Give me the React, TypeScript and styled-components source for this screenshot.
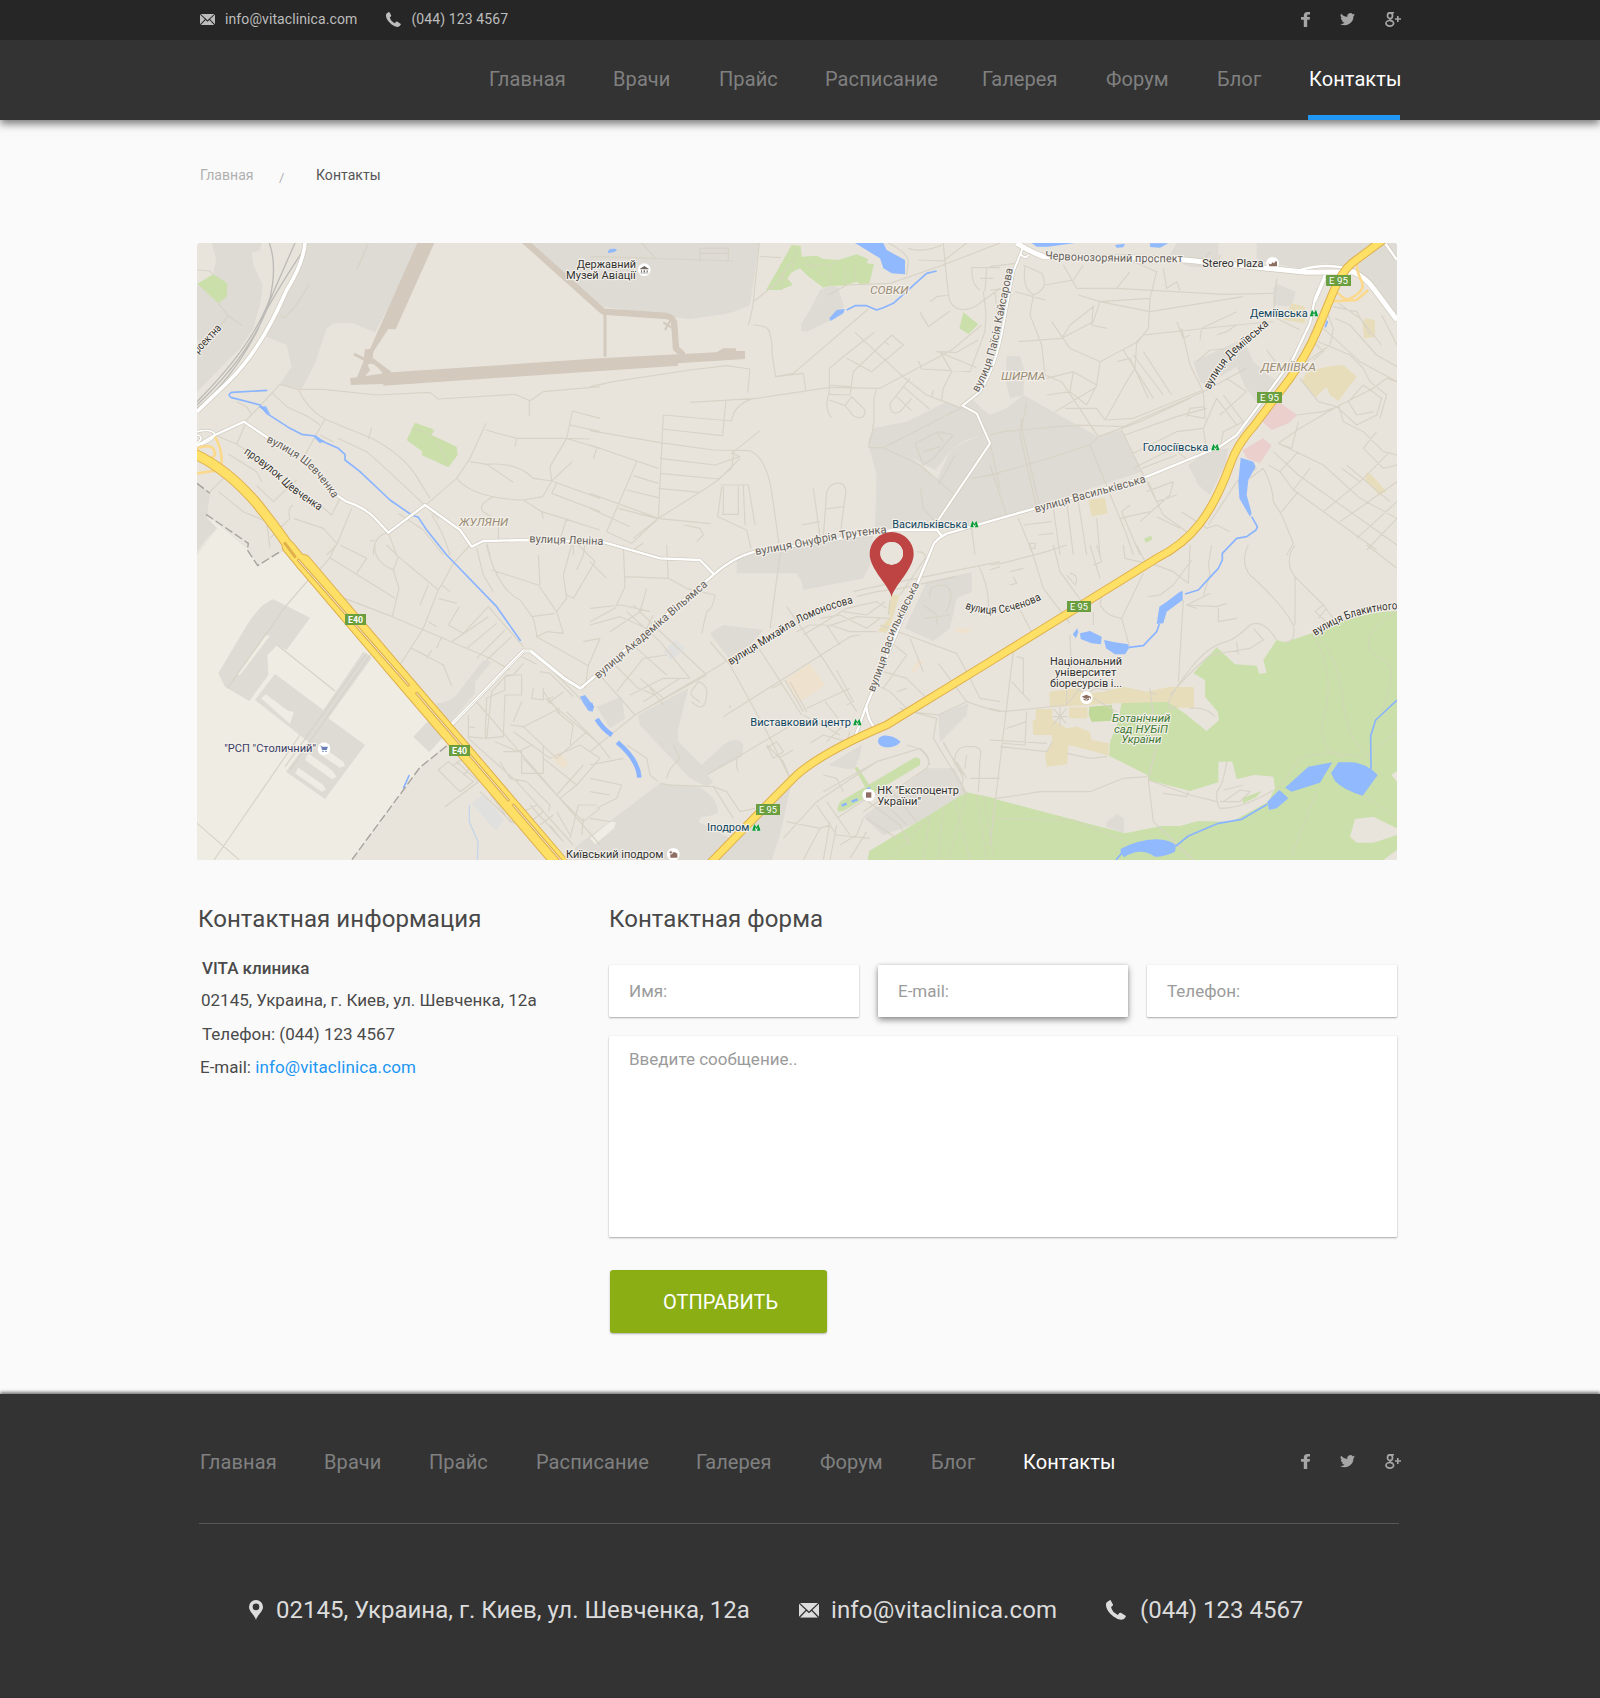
import React from 'react';
import styled, { createGlobalStyle } from 'styled-components';

const GlobalStyle = createGlobalStyle`
  * { box-sizing: border-box; }
  body { margin: 0; background: #fafafa; font-family: Roboto, "Noto Sans", sans-serif; color: #4a4a4a; }
  a { color: inherit; text-decoration: none; }
`;

/* ---------- layout ---------- */

const Page = styled.div`
  width: 1600px;
  height: 1698px;
  display: flex;
  flex-direction: column;
  overflow: hidden;
`;

const TopBar = styled.header`
  height: 40px;
  flex: none;
  padding: 0 199px 1px 200px;
  background: #262626;
  display: flex;
  align-items: center;
  justify-content: space-between;
`;

const NavBar = styled.nav`
  height: 80px;
  flex: none;
  padding-left: 488px;
  background: #333;
  display: flex;
  box-shadow: 0 4px 8px rgba(0, 0, 0, 0.5);
  clip-path: inset(0 0 -20px 0);
`;

const TopContacts = styled.div`
  display: flex;
  align-items: center;
  color: #bdbdbd;
  font-size: 14px;
  line-height: 20px;
  letter-spacing: 0.1px;
`;

const TopContact = styled.a<{ $gap: number }>`
  display: flex;
  align-items: center;
  gap: 10px;
  margin-right: ${(p) => p.$gap}px;
  padding-bottom: 1px;
  svg { margin-top: 1px; }
`;

const Social = styled.div`
  display: flex;
  align-items: center;
  color: #a6a6a6;
  svg { display: block; }
`;

const SocialLink = styled.a<{ $gap: number }>`
  margin-left: ${(p) => p.$gap}px;
`;

const NavCell = styled.div<{ $w: number }>`
  width: ${(p) => p.$w}px;
  flex: none;
`;

const NavLink = styled.a<{ $active?: boolean }>`
  display: inline-block;
  white-space: nowrap;
  font-size: 20px;
  line-height: 24px;
  letter-spacing: 0.1px;
  color: ${(p) => (p.$active ? '#fff' : '#808080')};
`;

const HeaderLink = styled(NavLink)`
  height: 80px;
  padding-top: 27px;
  text-indent: 1px;
  ${(p) => (p.$active ? 'width: 92px;' : '')}
  border-bottom: ${(p) => (p.$active ? '5px solid #2196f3' : '0')};
`;

const Main = styled.main`
  width: 1200px;
  height: 1274px;
  flex: none;
  margin-left: 197px;
`;

const Crumbs = styled.div`
  height: 123px;
  padding: 45px 0 0 3px;
  display: flex;
  font-size: 14px;
  line-height: 20px;
  color: #b0b0b0;
`;

const Crumb = styled.span<{ $w: number; $current?: boolean }>`
  width: ${(p) => p.$w}px;
  letter-spacing: 0.05px;
  color: ${(p) => (p.$current ? '#555' : '#b0b0b0')};
`;

const Slash = styled.span`
  width: 37px;
  padding-top: 3px;
  font-size: 13px;
`;

const MapFrame = styled.div`
  width: 1200px;
  height: 617px;
  border-radius: 3px;
  overflow: hidden;
  svg { display: block; }
`;

const Columns = styled.div`
  display: grid;
  grid-template-columns: 412px 788px;
`;

const Heading = styled.h2`
  margin: 0;
  padding-top: 44px;
  height: 105px;
  font-size: 24px;
  line-height: 30px;
  letter-spacing: 0.07px;
  font-weight: 400;
  color: #484848;
`;

const InfoHeading = styled(Heading)`
  height: 93px;
`;

const Info = styled.section`
  padding-left: 1px;
`;

const InfoLine = styled.p<{ $indent: number; $strong?: boolean; $h?: number }>`
  margin: 0;
  height: ${(p) => p.$h ?? 33}px;
  padding-left: ${(p) => p.$indent}px;
  font-size: 17px;
  line-height: 30px;
  white-space: nowrap;
  font-weight: ${(p) => (p.$strong ? 500 : 400)};
  color: #4a4a4a;
  a { color: #2196f3; letter-spacing: 0.13px; }
`;

const Form = styled.form`
  display: flex;
  flex-direction: column;
  align-items: flex-start;
`;

const Fields = styled.div`
  display: flex;
  gap: 19px;
  margin-bottom: 19px;
`;

const Input = styled.input<{ $raised?: boolean }>`
  width: 250px;
  height: 52px;
  border: 0;
  border-radius: 1px;
  padding: 0 20px;
  background: #fff;
  font: 17px Roboto, "Noto Sans", sans-serif;
  box-shadow: ${(p) =>
    p.$raised
      ? '0 3px 6px rgba(0,0,0,.42), 0 0 3px rgba(0,0,0,.15)'
      : '0 1px 2px rgba(0,0,0,.32), 0 0 1px rgba(0,0,0,.15)'};
  &::placeholder { color: #9b9b9b; opacity: 1; }
`;

const Message = styled.textarea`
  width: 788px;
  height: 201px;
  border: 0;
  border-radius: 1px;
  padding: 13px 20px;
  resize: none;
  background: #fff;
  font: 17px/20px Roboto, "Noto Sans", sans-serif;
  box-shadow: 0 1px 2px rgba(0,0,0,.32), 0 0 1px rgba(0,0,0,.15);
  &::placeholder { color: #9b9b9b; opacity: 1; }
`;

const Submit = styled.button`
  width: 217px;
  height: 63px;
  margin: 33px 0 0 1px;
  border: 0;
  border-radius: 3px;
  background: #8aae14;
  color: #fff;
  font: 20px Roboto, "Noto Sans", sans-serif;
  padding: 1px 0 0 4px;
  box-shadow: 0 1px 2px rgba(0,0,0,.3);
`;

const Footer = styled.footer`
  flex: 1;
  background: #333;
  box-shadow: 0 -2px 3px rgba(0,0,0,.5);
  padding: 0 201px 0 199px;
`;

const FooterNav = styled.div`
  height: 130px;
  padding: 7px 0 0 1px;
  border-bottom: 1px solid #575757;
  display: flex;
  align-items: center;
`;

const FooterSocial = styled(Social)`
  margin: 0 -2px 2px auto;
`;

const FooterContacts = styled.div`
  display: flex;
  padding-left: 50px;
  padding-top: 70px;
  color: #dcdcdc;
  font-size: 24px;
  line-height: 32px;
`;

const FooterContact = styled.a<{ $w: number; $gap: number; $spacing?: number }>`
  width: ${(p) => p.$w}px;
  flex: none;
  display: flex;
  gap: ${(p) => p.$gap}px;
  white-space: nowrap;
  letter-spacing: ${(p) => p.$spacing ?? 0}px;
`;

/* ---------- icons ---------- */

const Mail = ({ w }: { w: number }) => (
  <svg width={w} height={w * 0.74} viewBox="0 0 20 14.8" fill="currentColor">
    <path d="M1 0H19L10 8.4ZM0 .8 6.6 7.1 0 13.8ZM20 .8V13.8L13.4 7.1ZM7.4 7.9 10 10.3 12.6 7.9 19 14.8H1Z" />
  </svg>
);

const Phone = ({ w }: { w: number }) => (
  <svg width={w} height={w} viewBox="0 0 15 15" fill="currentColor">
    <path d="M.6 1.6 2.8.1Q3.4-.1 3.7.5L5.2 3.4Q5.4 4 4.9 4.4L3.8 5.3Q4.5 9.2 8.9 11.2L10 9.8Q10.5 9.3 11.1 9.6L14.5 11.7Q15.1 12.2 14.7 12.8 13.7 15 11.4 14.9 8.7 14.8 5.6 12.4-.3 7.7 0 3.2 0 2.2.6 1.6Z" />
  </svg>
);

const Pin = () => (
  <svg width="14" height="20" viewBox="0 0 14 20" fill="currentColor" fillRule="evenodd">
    <path d="M7 20C6 15.500 0 11.500 0 7A7 7 0 0 1 14 7C14 11.500 8 15.500 7 20ZM7 3.600A3.300 3.300 0 1 0 7 10.200 3.300 3.300 0 1 0 7 3.600Z" />
  </svg>
);

const Facebook = () => (
  <svg width="9" height="15" viewBox="0 0 9 15" fill="currentColor">
    <path d="M9 .1V2.600H7.300Q6.200 2.600 6.200 3.700V5.100H9L8.600 7.700H6.200V15H2.800V7.700H0V5.100H2.800V3.500Q2.800 0 6.400 0Z" />
  </svg>
);

const Twitter = () => (
  <svg width="15" height="13" viewBox="0 2.700 24 19.600" fill="currentColor">
    <path d="M24 4.600a10 10 0 0 1-2.800.8 5 5 0 0 0 2.100-2.700 10 10 0 0 1-3.100 1.200 4.900 4.900 0 0 0-8.400 4.500A14 14 0 0 1 1.700 3.200a4.900 4.900 0 0 0 1.500 6.500 5 5 0 0 1-2.200-.6 4.900 4.900 0 0 0 4 4.900 5 5 0 0 1-2.300.1 4.900 4.900 0 0 0 4.600 3.400A10 10 0 0 1 0 19.500a14 14 0 0 0 21.500-12.400A10 10 0 0 0 24 4.600Z" />
  </svg>
);

const GooglePlus = () => (
  <svg width="16" height="15" viewBox="0 0 16 15" fill="none" stroke="currentColor">
    <ellipse cx="5" cy="3.700" rx="2.500" ry="2.900" strokeWidth="1.700" />
    <ellipse cx="4.800" cy="11.300" rx="3.800" ry="2.800" strokeWidth="1.700" />
    <path d="M5 .7H9M5.500 6.500Q4.300 7.400 5.500 8.100L7.500 9.300" strokeWidth="1.400" />
    <path d="M12.800 4V10M10 7H16" strokeWidth="1.600" />
  </svg>
);

const SocialLinks = () => (
  <>
    <SocialLink $gap={0} href="#"><Facebook /></SocialLink>
    <SocialLink $gap={30} href="#"><Twitter /></SocialLink>
    <SocialLink $gap={30} href="#"><GooglePlus /></SocialLink>
  </>
);

/* ---------- map ---------- */

// The map is drafted on sheets: three columns, two rows, 1200 by 930 units each.
type Sheet = [number, number, string];

const Sheets = ({ data, ...rest }: { data: Sheet[] } & Omit<React.SVGProps<SVGPathElement>, 'data'>) => (
  <>
    {data.map(([c, r, d], i) => (
      <path key={i} d={d} transform={`translate(${c * 1200} ${r * 930})`} {...rest} />
    ))}
  </>
);

const FIELDS = 'M21 960 80 882 50 840 175 945 203 992 290 942 330 1000 770 1525 690 1600 485 1875H21Z';

const BLOCKS: Sheet[] = [
  [0, 0, 'M65 24H215L210 45 185 55 190 90 218 150 212 200 190 280 150 340 80 410 21 470V150L70 118 78 70Z'],
  [0, 0, 'M355 24H700L555 292 490 265 430 265 410 280 375 385 335 462 270 448 305 395 290 330 230 305 290 160 345 60Z'],
  [0, 0, 'M1005 24 1240 215 1440 245 1500 252 1620 235 1680 210 1708 24Z'],
  [0, 0, 'M21 745 60 775 50 850 82 880 45 915 21 950Z'],
  [0, 1, 'M85 385 165 250Q210 175 250 163L360 218 290 315 262 300 232 330 235 390 178 468 105 425Z'],
  [0, 1, 'M195 465 255 387 400 495 520 320 545 338 415 520 525 600 405 762 288 680 355 590Z'],
  [0, 1, 'M670 575 720 522 765 570 718 622Z'],
  [0, 1, 'M735 475Q770 478 800 450L880 345 905 350 855 410V445L775 540Z'],
  [1, 0, 'M633 268 660 225 690 165 720 152 742 155 762 215 735 250 650 290 633 288Z'],
  [1, 0, 'M835 615 850 580 950 560 1070 500 1115 518 1150 495 1175 520 1200 540 1250 520 1300 480 1390 530 1525 605 1595 585 1655 710 1230 850 1080 880 855 880 860 720 840 645Z'],
  [2, 0, 'M540 60 560 24H685V100L600 95 545 75Z'],
  [2, 0, 'M800 24H1180L1100 75 1060 95 1000 85 920 100 800 75Z'],
  [2, 0, 'M1185 24H1221V250L1110 115 1100 90Z'],
  [2, 0, 'M850 160 862 147 917 170 905 215 850 210Z'],
  [2, 0, 'M610 380 740 320 770 335 790 380 865 445 800 500 765 455 740 395 650 450 630 440Z'],
  [2, 0, 'M595 690 650 650 715 640 705 690 660 780 625 750Z'],
  [2, 0, 'M50 362 90 365 103 405 100 480 60 490 48 440Z'],
  [1, 1, 'M440 85V40L500 25 850-30 840 60 820 100 640 135 635 110 620 85Z'],
  [1, 1, 'M945 250 1010 110 1145 82V140L1100 160 1080 250 1030 288Z'],
  [1, 1, 'M360 265 400 240 520 255 480 300 415 338Z'],
  [1, 1, 'M145 510 295 430 262 560 265 590 335 660 400 600Q440 570 460 600L455 635 350 690 370 710 350 725 300 700 150 540Z'],
  [1, 1, 'M20 485 95 455 105 520 60 550Z'],
  [1, 1, 'M1045 510 1135 475 1130 510 1050 592Z'],
  [1, 1, 'M-80 945-30 895 85 810 210 715 320 725Q375 745 385 800 380 812 335 815L325 830 420 880 360 945Z'],
  [1, 1, 'M715 660 815 600 810 630 795 670 770 672Z'],
  [1, 1, 'M605 710 570 870 545 945H370L600 725Z'],
  [1, 1, 'M820 815 1010 670H1095L1130 745 965 840 880 870Z'],
  [2, 1, 'M350 830 380 808 402 820V863L350 845Z'],
];

const CLEARINGS: Sheet[] = [
  [0, 1, 'M213 460 228 448 295 498 312 500 300 537Z'],
  [0, 1, 'M355 625 425 675 440 695 425 702 345 645Z'],
  [0, 1, 'M390 600 460 650 465 662 450 668 385 625Z'],
  [0, 1, 'M325 668 400 720 408 735 395 740 315 685Z'],
  [0, 1, 'M228 270 240 272 150 390 140 390Z'],
  [1, 1, 'M0 880 60 830 78 832 72 850 15 898Z'],
];

const GREENS: Sheet[] = [
  [0, 0, 'M22 146 70 118 112 145 110 185 85 205Z'],
  [0, 0, 'M650 615 675 563 730 583 725 600 800 635 803 660 775 697 695 660 698 650Z'],
  [1, 0, 'M528 165 560 110 605 30 632 32 635 65 680 62 700 72 745 75 800 58 835 72 830 85 852 87 838 145 810 148 800 140 765 152 720 152 700 158 650 120 630 100 605 112 592 130 608 150 570 165Z'],
  [1, 0, 'M1120 232 1165 268 1135 297 1108 280Z'],
  [2, 0, 'M462 912 482 902 488 912 468 924Z'],
  [2, 0, 'M1048 410 1060 405 1083 425 1080 435Z'],
  [1, 1, 'M742 790 750 770 970 640Q995 630 990 660L760 798 745 800Z'],
  [1, 1, 'M793 668 803 666 838 720 825 725Z'],
  [1, 1, 'M833 945 838 918 1130 742 1215 760V945Z'],
  [2, 1, 'M0 758 405 865 515 843 570 843 625 828 725 830 835 770 855 730 850 695 795 690 740 702 727 650H685V712L600 738 475 705 472 690 357 632 360 590 385 530 395 470H535L590 510 650 558 687 525 683 500 645 455 645 405 610 385 680 307 735 358 800 362 808 387 830 383 820 345 860 285 885 292 965 265Q1100 200 1221 198V945H0Z'],
  [2, 1, 'M755 760 815 738 800 755 760 775Z'],
];

const SAND: Sheet[] = [
  [2, 1, 'M178 440 255 430 290 445 340 440 400 425 470 440 540 425 612 427V488H560L535 470 385 475 180 487Z'],
  [2, 1, 'M137 492H187V523L230 550 260 545 300 560 305 585 357 595 355 632 295 615 235 600 232 658 170 665 165 625 187 590 185 570 130 570 127 528 137 525Z'],
  [2, 1, 'M237 487H292V520H237Z'],
  [2, 0, 'M905 205 945 215V265L880 255Z'],
  [2, 0, 'M1125 250 1155 255V305L1122 310 1117 265Z'],
  [2, 0, 'M935 440 950 410 1010 395 1060 390 1100 425 1045 498 1020 480 1010 455 975 488Z'],
  [2, 0, 'M295 795 345 788 353 835 305 845Z'],
  [2, 0, 'M1130 710 1145 720 1190 770 1165 778 1125 735Z'],
  [1, 1, 'M905 150 928 150 905 230 890 265 862 258 900 215 895 185Z'],
];

const PEACH: Sheet[] = [
  [1, 1, 'M585 405 660 355 705 420 628 472Z'],
  [1, 1, 'M1095 250H1145L1130 265 1095 262Z'],
  [1, 1, 'M965 375 985 345 1000 350 970 385Z'],
  [0, 1, 'M1085 640 1105 622 1138 655 1120 672Z'],
];

const PINK: Sheet[] = [
  [2, 0, 'M805 550 840 500H865L922 540 895 565 845 585Z'],
  [2, 0, 'M758 645 820 610 845 632 810 685 770 670Z'],
];

const WATER: Sheet[] = [
  [1, 0, 'M795 24H880L890 45 945 75V118L905 115 880 100 870 70Z'],
  [1, 0, 'M718 250 740 225 765 222 760 235 722 258Z'],
  [1, 0, 'M54 50Q55 38 80 42 82 52 54 54Z'],
  [2, 0, 'M125 24H255L175 35H140Z'],
  [2, 0, 'M480 25H535L510 38 480 36Z'],
  [2, 0, 'M375 30 405 26 400 37 380 38Z'],
  [2, 0, 'M752 668 790 680 797 695 775 735 770 780 785 835 780 845 748 790 745 740Z'],
  [2, 0, 'M1003 275 1010 255 1015 260 1008 278Z'],
  [0, 0, 'M205 515 228 514 242 540Z'],
  [0, 0, 'M370 605 405 618 390 625Z'],
  [0, 1, 'M1170 455 1185 450 1212 485 1208 500 1195 497 1180 475Z'],
  [1, 1, 'M864 590C862 565 905 565 932 590 915 612 868 613 864 590Z'],
  [2, 1, 'M570 140 578 138V165L530 200 520 235 500 237 508 185 530 170Z'],
  [2, 1, 'M248 268 262 250 265 262 258 280Z'],
  [2, 1, 'M270 265 300 258 335 275 333 298 305 295 272 282Z'],
  [2, 1, 'M342 285 375 292 415 298 417 310 405 328 375 328 348 310Z'],
  [2, 1, 'M392 912Q440 885 500 883 540 885 558 900L555 920Q525 935 495 935 450 905 402 937L392 925Z'],
  [2, 1, 'M832 770 868 735 895 760 860 790 837 795Z'],
  [2, 1, 'M885 728 955 665 1027 652 990 713 905 740Z'],
  [2, 1, 'M1023 685 1045 652H1085Q1130 655 1163 690L1118 752Q1060 735 1035 708Z'],
];

const STREAMS: Sheet[] = [
  [0, 0, 'M232 466 125 472Q110 480 125 488L210 510 230 535 300 580 335 598 375 603 400 620 445 640 465 658 465 675 510 710 600 795 665 840 685 847 710 885 770 960 920 1115 992 1218'],
  [1, 0, 'M1040 108 1010 115 960 160 910 205 880 218 860 225 830 212 795 212 770 225'],
  [2, 0, 'M785 845 802 875 798 885 770 905 740 910 697 955V975L685 1000 657 1030 625 1065 585 1077'],
  [2, 1, 'M508 237 500 260 460 302 417 307M378 945 395 925M558 903 595 873 685 835 755 823 832 778M1221 465 1157 525 1142 573 1143 672'],
  [0, 1, 'M640 730 658 690'],
];

const CANALS: Sheet[] = [
  [1, 1, 'M0 475 6 490M20 522Q38 552 66 570M82 592Q145 645 148 698'],
];

const LANES: Sheet[] = [
  [0, 0, 'M535 24 500 105M358 148 315 215 285 248 270 240M85 205 115 242 157 272M22 105 60 108 68 118M115 242 70 300M325 463 400 463 560 480 720 472 745 492 975 478 1020 497 1060 470 1230 455M1018 497V542M270 448 325 463M245 472 290 515 355 545 390 570M325 463Q350 520 405 553L545 610Q640 660 680 725L720 790M270 448 165 560M140 500 170 515 185 540M405 553 375 605 345 660M545 578 535 612M443 610 530 650Q600 710 745 850M430 620 390 600M80 602 140 628 240 690M140 628 165 570M115 657 200 710 215 740M200 752 250 800M250 800 320 735M372 795 425 840 450 790M240 910 300 850Q290 820 310 810M310 850 400 880 440 925M485 820 440 930 410 960M85 770 160 830 230 860 240 940M60 770 100 730M888 565 840 670 800 730 705 812M888 585 980 610 1130 610 1200 612M980 610 975 635M840 680 890 688 970 742M890 688Q980 680 1030 730L1085 738 1058 785 1000 795Q850 790 800 730M1147 528 1130 610 1080 695 1085 738 1147 680M1147 528 1230 550M1140 570 1230 590M1085 738 1230 790M1085 775 1230 830M1100 745 1085 775M1000 795 1055 830 1120 850 1230 885M910 785Q860 810 880 830L925 860V915M1135 612 1230 640M1055 830 1060 850M1130 850 1110 915M725 840Q760 890 780 960M625 835 700 885 760 960M595 893 620 960M595 893Q550 900 550 960M540 918 555 915M890 925 900 960M1150 925V960M1185 925 1180 960'],
  [1, 0, 'M0 64 430 78M330 40H415V78M330 55H415M330 40V78M155 24 195 68M510 64 573 68M508 24 490 200Q485 240 475 270M605 78 560 145 490 200M490 270Q540 270 540 300 550 330 545 350L557 425 640 415 647 465M557 425 610 415 835 222M300 502 500 490 580 478 720 457 870 460 1085 345 1175 270M0 455 70 440 300 405 410 392 480 402 473 473M408 495 398 602 215 582M220 540 425 558Q430 510 490 490M220 540 205 850M0 587 210 623 370 645 480 647Q530 670 545 770L567 925M210 670 375 690 450 665 425 655 510 587M210 715 385 732 425 700 432 648M205 760 330 772 385 735 450 670M330 772 205 850 130 910M0 630 205 700M20 640 10 672M140 680 50 890M130 722 205 745M110 765 205 788M85 820 200 850 362 866M0 775 205 850M0 820 120 875M50 890 125 925 205 850M120 950 160 925M283 870 330 880 340 900 320 920M390 750H475L495 870M395 755 383 845 470 885 483 940M395 838H445V755M400 755V838M460 750 465 870M670 760 690 905M635 870 690 860M700 905 710 770Q725 735 760 748L768 765 750 905M705 822 760 815M795 292 945 430 1010 480 1115 520M853 292 770 357 718 400V470Q700 520 725 548M770 370 845 410 940 330 905 300 790 410 780 480 718 478M718 495 765 512 785 485 825 525Q825 560 790 542L765 512M885 320 897 330M718 450 780 455M860 460 852 490V560L845 600 835 635M960 430 900 505Q900 545 930 530L965 490M940 455 1018 522M920 485 965 527M985 378 995 402 1140 410 1185 290M1040 350 1100 352 1165 315M1050 350 1085 410 1060 460 1055 495M1045 350 1160 398M1030 465 1025 485M895 24Q955 55 955 80L950 120M1060 24Q1070 140 1078 195 1100 240 1155 215L1230 160M715 180 770 150 900 145 1060 90 1230 24M985 75 1060 78 1130 24M955 40Q1000 55 1055 30M1230 98H1145Q1145 150 1170 165M1190 98 1185 170M1170 130H1210M1078 180 1040 185 1020 200M990 232 1015 275M1180 170 1188 235 1185 290M1215 170 1222 240M1015 275 1080 228M835 638H880L990 690 1100 785M880 638 1110 520M975 625 1045 590 1090 600 1030 670 1000 690 975 625M1040 590 1060 620M1000 650 1050 635M1045 750 1095 660M990 755 1000 820 1055 880M1145 730 1230 715M1200 625 1230 760M1145 880 1155 960'],
  [2, 0, 'M0 95 75 85M0 165 60 160M100 90 155 115Q180 160 130 180 95 160 105 95M75 170 165 195M130 180 120 240 155 330 165 420 215 440 325 605M85 320 215 310 310 260 330 200 480 190 500 110 430 80M165 150 250 135 280 90M220 90 260 160 380 160 420 110M380 160 700 178 850 175M265 180 330 200 480 230 760 185M480 190 475 280 440 325M310 210 305 270 350 280M185 260 240 340 330 380 435 325 460 300 740 270 850 260M215 310 240 270 310 215M440 325 435 400 410 440 345 555M330 380 320 450 250 410 170 430M250 410 240 470 170 480M240 470 290 510 320 450M380 380 420 370 475 490M400 345 490 490M430 360 520 480M460 350 545 480M575 280 600 390 640 470 645 550 590 540M225 520 320 520 345 555M195 530 320 455M260 570 400 575 640 470 770 400M345 555 430 550 640 465M325 605 450 560 600 490M405 600 560 545 650 520M430 655 560 590 640 580 680 490 740 570M395 585 455 710 520 840 590 890M430 700 550 640 600 680M455 700 560 660M590 545 600 520 645 515M640 580 650 650M700 480 760 560 700 590 690 640M690 540 770 470 710 430M860 130 850 245 930 285M630 315 635 280 740 230M560 260 580 310 600 300M680 300 710 290 740 270M520 100 530 160 560 140 570 165M690 60 685 100M640 80 660 50M620 380 660 345 740 340M830 345 845 365 870 400M900 370 920 385 970 320 1000 350 970 375M1010 230 1030 280 1020 330 950 380M1030 215 1100 230 1140 300M1045 205 1110 250 1175 330M1175 240 1221 330M1035 250 1080 270 1160 360 1221 395M1000 280 1110 380 1221 440M985 320 1080 360 1120 400 1140 440M930 430 985 500 1040 515 1150 460M1040 515 1100 570 1160 540 1175 490 1120 450 1075 500M1075 500 1100 540 1150 530M1150 460 1190 430 1221 440M1140 440 1190 480 1170 550M920 540 1000 530 1045 515M865 625 930 580 1040 515M865 625 905 640 925 560M850 650 925 720 1221 930M865 625 1000 690 1110 790 1221 850M835 690 870 710 910 765 1160 945M870 710 925 650M910 765 960 700M1045 510 1060 560 1120 590 1180 650 1221 660M1055 700 1110 740 1200 650M1070 690 1200 800M1160 590 1120 640 1180 700 1221 690M1000 830 1110 740M1050 860 1221 740M1100 910 1221 800M1130 945 1221 850M870 835 925 770M780 730 820 700Q850 760 850 800L875 840 910 925 890 960M575 830 650 880 680 870 720 890M655 870 740 740 800 700M450 860 540 780 550 740M500 845 570 880M475 740 500 800 560 780M470 770 550 740M0 600 40 590 200 575 300 570 325 605M0 720 110 690 300 630 325 605M0 690 50 840M95 550 90 600 140 820M110 500 95 580 150 820M300 630 410 900 430 960M190 820 210 960M230 800 250 960M265 800 290 960M320 850 330 960M85 850 130 960M100 870 185 860M120 925H135V940H120ZM145 900 190 895M420 810 395 830 450 960M390 850 480 830'],
  [0, 1, 'M437 0 420 38 385 78M355 105 290 180 112 430M262 300 435 438M450 0 530 40 500 85M420 38 615 160M555 0Q550 50 610 75M590 0 625 35 610 75 627 130 607 215M450 155 607 215 900 340 960 375M625 35 745 135 700 250 630 360M840 0 790 55 760 110 745 135M860 10 880 90 910 140M745 160 800 175M755 120 780 140M715 120 690 180M808 185 775 240 820 265 895 185 1000 305M715 230 740 245M755 275 740 310M725 315 710 340M665 310 760 360 785 422M665 310 715 335M895 215 785 290M920 235 830 310M945 255 860 340M965 275 890 345M890 0Q920 130 990 165L1030 220Q1040 260 1040 275L1070 260 1120 265 1100 200 1130 160 1120 90 1145 0M905 75 1045 120 1100 200M1045 30 1050 120M1025 215 1095 205M1130 150 1150 160 1215 50 1165 0M1160 75 1180 30M1040 275 1195 362 1230 280 1180 290M1195 362 1185 430M995 335 1040 358M1000 355 970 390 945 395 905 440M945 395V435L890 460 885 580 940 575 945 450H995V390H945M835 510V580L980 710M855 465 1230 900M835 545 855 548M835 575 880 580M905 440 890 580M915 590 985 620 1025 600M980 710 1150 900M995 470 970 530M1050 380 1080 385 1150 455M1030 430 1025 460 1060 465 1060 430M1070 465 1090 455M1065 460 1220 590M1090 380 1180 470M1075 475 1120 440M960 540 1000 545 1110 490M970 560 1080 640 1170 600 1230 640M1000 545 1100 640 1190 560M940 620H995V685H1060V600M1060 640 1160 720 1230 640M1000 640 1100 750 1180 660M930 650 960 700 1010 710 1080 780 1075 800M1020 780 1120 890M1040 780 1000 800M1060 800 1020 830M1090 810 1050 840M1120 890 1080 840M1140 880 1165 780H1220M1100 750 1180 830 1230 790M1100 800 1140 870M1160 720 1110 760M1180 820 1175 870M1060 440 1110 505M1100 500 1150 540 1140 600M1130 500 1230 600M745 675 775 650 850 710 810 740ZM800 650 865 710 765 785M790 660 815 645M820 690 840 670M840 660 960 830 1000 840M870 740 970 835M285 665 530 325M300 675 540 330M330 570 72 945M21 835 148 945'],
  [1, 1, 'M100 0 105 125 75 190 0 230M105 95 235 100 290 130 330 140M235 100 230 0M330 140 375 150Q370 190 350 200L335 265M170 130 150 200 60 260M130 180 190 240 350 390M110 200 210 290 300 400M190 210 140 310 230 390M0 190 95 180 180 200M0 240 90 215 170 250M60 345 145 430 195 450M20 380 135 510M350 390 135 510 0 620M135 510 350 385 415 345M120 450 220 400 300 400M160 470 270 400M180 430 220 480M150 400 220 460M80 440 160 340 230 330M360 290 420 360 530 560 605 710M500 300 565 400M400 515 780 275 810 270M590 185 705 350 800 500M565 400 635 510M585 405 640 500M600 410 650 500M575 415 545 430M620 260 660 240 710 240 750 300M640 270 690 240 770 190 860 170 890 190M690 220 750 210 830 250 870 220M760 200 830 210 885 170M710 245 800 215 900 220M720 240 780 260 860 260M790 140 830 130 1230 50M800 155 860 140 930 130 1100 95M870 240 910 255 1100 325 1135 390 1170 460 1230 470M900 290 950 330 880 430M960 280 1000 380M880 380 950 400 1020 470M860 420 900 440 960 500M1045 355 1130 470 1045 510 960 500M920 440 950 430M930 490 1040 520 1030 580 1130 745M1130 470 1190 490 1230 500M1060 595 1120 690M740 375 790 470 770 480M650 490 780 430M640 510 750 570M705 470 760 540 710 590M530 610 560 590 580 620 550 640 530 600M605 710 580 650 530 600M565 640 610 615M660 595 700 570 770 590 780 560M350 690 520 590 605 540M420 490 420 480M330 470Q290 450 310 430L325 410Q355 420 350 450 345 510 305 470M230 700Q235 670 270 640L250 600M210 715 240 720 370 725 410 740 450 800 495 790M370 725 430 820M440 640V665L445 680M0 700 95 720 80 760 20 790M0 740 60 750M110 600 170 640 180 690 205 710M0 660 100 640M30 600 60 640M580 880 680 770 860 650 990 610M590 830 690 850 720 840M690 850 640 945M720 830 700 945M740 840 720 945M680 780 740 870 840 880M710 770 780 870M740 820 860 740M700 690 740 700 760 740M820 760 930 840 960 900M850 740 950 840M890 720 980 830M750 900 800 870 820 820M780 940 830 860M830 820 920 880M860 650 700 740M990 610Q1030 640 1010 670L820 800M950 600Q1010 610 1020 660M1060 590 1120 700Q1110 740 1130 745M1140 700 1230 700M1095 660Q1090 600 1140 605 1180 600 1170 640L1165 740M1100 650 1130 700M1130 630 1125 670M590 0 570 30 540 250M1165 60Q1200 130 1195 200M900 165 895 210M980 20Q1010 20 1005 40L930 150M1000 180 1040 210 1040 240M1020 160Q1010 120 1060 120 1100 130 1070 200M1005 220 1080 210M0 50 50 100M0 820 60 830'],
  [2, 1, 'M120 0 160 130 240 235M190 0 210 80 275 170M300 0 330 100M320 0 335 50 310 60M440 0 465 50M460 85 395 220Q350 215 330 180L335 155M470 50 550 80 595 115 600 0M400 0 405 40 470 55M665 0 655 60 660 90 640 150M660 145 640 155 590 180 680 185 710 175M685 190V230L740 220M580 165 565 410M475 155 510 150 550 120 605 45M240 85Q270 90 255 120L230 90M0 60 35 55 170 20 230 0M0 75 30 65M70 95 80 115 60 120M60 80 100 70M90 195 125 260M310 240 310 200M240 270 245 400M395 220 420 310M70 320 0 900M80 335 100 340 100 450M65 410 120 470M0 490 40 500 230 480M110 500 105 600 40 595M50 550 110 530M0 585 170 595M30 605 170 620 187 590M535 470Q560 420 610 360 660 300 710 290 740 280 780 240 820 220 860 285M540 450Q600 380 660 330 720 320 780 310L820 285 790 250M740 290 745 330M885 292Q920 290 910 240 880 180 780 90 750 50 775 0M915 0Q880 50 915 95V240M915 95 1000 180 975 200 1020 240M1000 180 1030 220M1130 0 1221 70M1010 190 985 220M480 430 500 600 475 705 490 830 610 945M20 760 90 750 150 740 300 740 400 700 470 695M0 700 20 700M230 430V480L270 430M260 430 380 500M500 450 480 440M535 470 540 490 560 485M600 490Q650 485 675 515M590 180 620 190M475 705 600 750 680 770M520 745 590 755 595 740M710 650Q700 720 680 740 680 780 690 790 760 790 850 735M690 770 750 770 780 740 750 735 700 770M700 735 760 720M230 625 300 640 350 635M300 440 320 430 360 435M190 490 228 535M230 490 188 540M210 482V545M188 515H233'],
];

const PARK_LANES: Sheet[] = [
  [2, 1, 'M965 265Q1030 360 1010 480 980 560 1010 610L1060 640M980 270Q1050 340 1060 480 1070 580 1140 640M1221 198Q1100 270 1150 330 1221 350 1200 420 1190 480 1170 500M860 740 930 640Q1020 610 1120 640L1221 560M1120 750 1221 820M980 740 905 930M0 820 250 825 400 885'],
  [1, 1, 'M1020 810 1000 945M1095 770 1140 945M1160 750 1190 945M1180 750 1210 930M900 945 1020 810M1130 745 1075 945M1060 790 1045 945'],
  [0, 0, 'M665 578Q740 600 755 645L775 690M720 600 735 585'],
  [1, 0, 'M560 115 600 140M620 35 605 110M580 112 575 165M640 90 720 90 745 75M720 90V152M765 90V152M795 90V140M640 75 710 125'],
];

const RAILS: Sheet[] = [
  [0, 0, 'M238 24Q262 90 240 190 190 330 21 500M315 24Q250 170 205 280 130 430 21 520M352 28Q270 150 230 225 170 370 21 510'],
];

const DASHES: Sheet[] = [
  [0, 0, 'M21 745 60 775M48 838 175 925 172 945 203 992 275 947'],
  [0, 1, 'M770 603 690 667 640 735 485 945'],
];

type Road = { d: string; w: number };

const WHITE_ROADS: Road[] = [
  { w: 11, d: 'M345 24Q340 85 290 165 215 340 120 435L21 530' },
  { w: 7, d: 'M21 632 75 600 162 560 235 610M432 775 470 800Q530 820 560 855L595 893 705 810 810 885 845 935 880 918 1020 915 1235 920 1410 970 1530 975 1572 1018' },
  { w: 5, d: 'M21 590Q70 580 75 600 60 625 21 630M21 600Q45 605 21 625' },
  { w: 7, d: 'M1170 1362 1310 1240 1572 1018Q1640 960 1700 950L2110 885 2240 885' },
  { w: 9, d: 'M782 1472 1000 1248H1022L1120 1328 1170 1360' },
  { w: 7, d: 'M1990 1520 2030 1410 2180 1050 2232 925Q2250 905 2270 896L2430 850 2870 725 2960 688 3090 635 3140 600 3200 520 3310 370 3360 265 3375 190 3405 120M2030 1415Q2030 1450 2057 1483M2230 870 2255 903' },
  { w: 6, d: 'M2500 35 2470 110 2440 270Q2420 390 2370 470L2317 512 2360 535 2400 625 2245 855M2490 55Q2505 75 2515 60' },
  { w: 15, d: 'M2480 24Q2510 45 2560 65 2900 65 3040 80L3350 112 3490 110Q3530 130 3550 160L3621 255' },
  { w: 7, d: 'M3330 105Q3400 85 3460 98M3585 24 3621 75M3405 130 3375 200M3430 170 3365 300' },
];

const RAMPS = 'M21 640Q75 620 75 660 60 680 21 672M75 605Q105 660 90 705L21 715M3500 85Q3500 110 3515 140 3530 170 3470 195 3430 170 3430 150M3535 165 3500 195 3410 200';

const E95 = 'M3580 14 3485 85Q3455 110 3430 170L3380 290Q3350 360 3300 430L3190 575Q3140 630 3120 690 3080 800 3030 865 2980 930 2900 970L2400 1280 2090 1470Q1900 1550 1820 1620L1750 1690 1560 1885';
const E40 = 'M10 655Q110 700 200 805 260 880 300 940L345 990';
const E40_DUAL = 'M340 982 640 1335 820 1545 1110 1885';

const MapText = styled.text<{ $tone?: string; $size?: number; $italic?: boolean }>`
  font-family: Roboto, "Noto Sans", sans-serif;
  font-size: ${(p) => p.$size ?? 34}px;
  font-style: ${(p) => (p.$italic ? 'italic' : 'normal')};
  fill: ${(p) => p.$tone ?? '#333'};
  stroke: #f2efe9;
  stroke-width: 7px;
  stroke-linejoin: round;
  paint-order: stroke;
`;

const ShieldText = styled.text`
  font-family: Roboto, "Noto Sans", sans-serif;
  font-size: 27px;
  fill: #fff;
`;

type Label = { t: string; x: number; y: number; w: number; tone?: string; italic?: boolean };

const METRO = '#0f4560';
const LABELS: Label[] = [
  { t: 'Державний', x: 1160, y: 98, w: 178 },
  { t: 'Музей Авіації', x: 1128, y: 131, w: 209 },
  { t: 'Stereo Plaza', x: 3037, y: 95, w: 183 },
  { t: 'НК "Експоцентр', x: 2062, y: 1677, w: 245 },
  { t: 'України"', x: 2062, y: 1709, w: 131 },
  { t: 'Київський іподром', x: 1128, y: 1868, w: 292 },
  { t: '"РСП "Столичний"', x: 103, y: 1552, w: 275, tone: '#3a3d66' },
  { t: 'Національний', x: 2580, y: 1290, w: 216 },
  { t: 'університет', x: 2595, y: 1322, w: 184 },
  { t: 'біоресурсів і...', x: 2580, y: 1355, w: 216 },
  { t: 'Ботанічний', x: 2766, y: 1461, w: 175, tone: '#3f7a33', italic: true },
  { t: 'сад НУБіП', x: 2772, y: 1493, w: 162, tone: '#3f7a33', italic: true },
  { t: 'України', x: 2794, y: 1525, w: 120, tone: '#3f7a33', italic: true },
  { t: 'СОВКИ', x: 2040, y: 177, w: 116, tone: '#9c8d76', italic: true },
  { t: 'ЖУЛЯНИ', x: 807, y: 872, w: 148, tone: '#9c8d76', italic: true },
  { t: 'ШИРМА', x: 2433, y: 435, w: 133, tone: '#9c8d76', italic: true },
  { t: 'ДЕМІЇВКА', x: 3212, y: 408, w: 166, tone: '#9c8d76', italic: true },
  { t: 'Васильківська', x: 2107, y: 878, w: 225, tone: METRO },
  { t: 'Деміївська', x: 3180, y: 245, w: 173, tone: METRO },
  { t: 'Голосіївська', x: 2858, y: 647, w: 197, tone: METRO },
  { t: 'Виставковий центр', x: 1681, y: 1472, w: 302, tone: METRO },
  { t: 'Іподром', x: 1551, y: 1788, w: 127, tone: METRO },
];

const STREETS: { id: string; t: string; d: string; w: number; dark?: boolean }[] = [
  { id: 'shev', t: 'вулиця Шевченка', d: 'M228 620Q300 655 345 690 400 740 440 810', w: 268 },
  { id: 'prov', t: 'провулок Шевченка', d: 'M160 655Q250 715 285 755 330 790 400 835', w: 287, dark: true },
  { id: 'proj', t: 'роектна', d: 'M24 357 108 268', w: 105, dark: true },
  { id: 'len', t: 'вулиця Леніна', d: 'M1018 922 1260 931', w: 222 },
  { id: 'trut', t: 'вулиця Онуфрія Трутенка', d: 'M1697 960 1840 935Q1960 905 2110 893', w: 400 },
  { id: 'akad', t: 'вулиця Академіка Вільямса', d: 'M1225 1333 1567 1040', w: 433 },
  { id: 'lom', t: 'вулиця Михайла Ломоносова', d: 'M1622 1291 1770 1200Q1870 1130 2010 1100', w: 415, dark: true },
  { id: 'vas1', t: 'вулиця Васильківська', d: 'M2053 1372Q2083 1300 2113 1200L2197 1030', w: 352 },
  { id: 'vas2', t: 'вулиця Васильківська', d: 'M2537 833 2900 733', w: 344 },
  { id: 'kais', t: 'вулиця Паїсія Кайсарова', d: 'M2364 473Q2415 390 2436 260L2478 60', w: 388 },
  { id: 'dem', t: 'вулиця Деміївська', d: 'M3060 465Q3102 380 3150 345L3250 258', w: 267, dark: true },
  { id: 'cherv', t: 'Червонозоряний проспект', d: 'M2565 72Q2700 82 2999 82', w: 414 },
  { id: 'sech', t: 'вулиця Сєченова', d: 'M2324 1120Q2430 1165 2580 1080', w: 240, dark: true },
  { id: 'blak', t: 'вулиця Блакитного', d: 'M3376 1203Q3490 1125 3640 1122', w: 263, dark: true },
];

const SHIELDS: [number, number, number, string][] = [
  [3408, 120, 75, 'E 95'],
  [3201, 471, 75, 'E 95'],
  [2631, 1098, 72, 'E 95'],
  [1698, 1707, 72, 'E 95'],
  [465, 1137, 63, 'E40'],
  [777, 1530, 63, 'E40'],
];

const METRO_MARKS: [number, number][] = [[2341, 857], [3360, 224], [3064, 626], [1990, 1451], [1687, 1767]];

const POINTS: [number, number, string, string][] = [
  [1363, 104, '#6f6761', 'M-13-3 0-11 13-3V-1H-13ZM-10 2H-7V8H-10ZM-2 2H2V8H-2ZM7 2H10V8H7ZM-12 9H12V11H-12Z'],
  [3248, 85, '#8d6e63', 'M-13-2Q-10 4-4 2L-1-3 4 0 10-8 13-4V9H-10Z'],
  [2036, 1680, '#8d6e63', 'M-8-8H8V8H-8Z'],
  [1450, 1858, '#8d6e63', 'M-12-8H-9V-11H-6V-8H-3V-5H-6V-2H-9V-5H-12ZM0-6H6L8-3H12V10H-9V0H-4Z'],
  [402, 1541, '#6b7fb5', 'M-13-9H-8L-6-6H12L8 4H-6L-9-7H-13ZM-5 6H-1V10H-5ZM4 6H8V10H4Z'],
  [2689, 1388, '#8d6e63', 'M-14-3 0-9 14-3V5H12V-1L0 4ZM-8 2 0 6 8 2V6Q0 11-8 6Z'],
];

const CityMap = () => (
  <svg width="1200" height="617" viewBox="21 24 3600 1851" preserveAspectRatio="none" strokeLinejoin="round">
    <rect x="21" y="24" width="3600" height="1851" fill="#e8e4dc" />
    <path d={FIELDS} fill="#efece3" />
    <Sheets data={BLOCKS} fill="#dedad4" />
    <Sheets data={CLEARINGS} fill="#efece3" />
    <path d="M2158 665 2200 695 2240 737 2275 660Q2310 610 2370 605 2320 615 2280 650L2235 705Z" fill="#e8e4dc" />
    <path d="M845 1705 880 1680 943 1755 918 1788ZM1420 1250 1455 1215 1485 1240 1445 1277Z" fill="#e0e0df" />
    <Sheets data={GREENS} fill="#cadfaa" />
    <path d="M2698 1415 2765 1410 2775 1457 2705 1460 2696 1440Z" fill="#c0d898" />
    <path d="M3495 1752 3550 1745 3621 1780V1800L3550 1823H3500L3480 1805ZM3621 1608 3604 1620 3621 1640ZM3580 1875 3621 1845V1875Z" fill="#e8e4dc" />
    <Sheets data={SAND} fill="#e8ddba" />
    <Sheets data={PEACH} fill="#eee2cf" />
    <Sheets data={PINK} fill="#ebcfcd" />
    <g fill="#d3c9bd">
      <path d="M480 430 605 412 1230 370 1580 352 1600 340H1638V348H1665V372L1464 385V392L580 452V447L483 450Z" />
      <path d="M682 24H733L617 283 595 282 550 350 545 400 520 430H500L520 380 525 343 540 342Z" />
      <path d="M550 370 605 412 580 420 540 385Z" />
    </g>
    <g fill="none" stroke="#d3c9bd">
      <path d="M492 357 600 412" strokeWidth="9" />
      <path d="M1000 15 1240 230 1430 243Q1452 248 1453 270L1458 340 1480 360" strokeWidth="19" />
      <path d="M1245 235V365" strokeWidth="9" />
      <path d="M1420 262 1445 278M1440 258 1425 285" strokeWidth="6" />
    </g>
    <path d="M533 390Q550 375 578 415 545 425 533 390Z" fill="#e8e4dc" />
    <Sheets data={LANES} fill="none" stroke="#d8d3c6" strokeWidth="3.5" />
    <Sheets data={PARK_LANES} fill="none" stroke="#d3d6b8" strokeWidth="3" />
    <Sheets data={WATER} fill="#91b9fe" />
    <Sheets data={STREAMS} fill="none" stroke="#8ab4ff" strokeWidth="5" />
    <Sheets data={CANALS} fill="none" stroke="#8ab4ff" strokeWidth="14" />
    <path d="M838 1710V1760L864 1820 862 1875" fill="none" stroke="#c7d5e8" strokeWidth="4" />
    <path d="M1955 1712 1970 1706M1985 1700 2003 1693M2030 1665 2040 1658" stroke="#8ab4ff" strokeWidth="7" />
    <Sheets data={RAILS} fill="none" stroke="#bdbbb7" strokeWidth="4" />
    <Sheets data={DASHES} fill="none" stroke="#a5a29d" strokeWidth="4" strokeDasharray="26 9" />
    {WHITE_ROADS.map((r) => (
      <path key={r.d} d={r.d} fill="none" stroke="#cfcabd" strokeWidth={r.w + 4} />
    ))}
    {WHITE_ROADS.map((r) => (
      <path key={r.d} d={r.d} fill="none" stroke="#fff" strokeWidth={r.w} />
    ))}
    <path d="M790 1464 1002 1248H1022" fill="none" stroke="#cfcabd" strokeWidth="2" />
    <path d={RAMPS} fill="none" stroke="#fbd98c" strokeWidth="8" />
    <g fill="none" strokeLinecap="round">
      <path d={E40} stroke="#dfb04c" strokeWidth="32" />
      <path d="M295 935 340 990" stroke="#dfb04c" strokeWidth="40" />
      <path d={E40_DUAL} stroke="#dfb04c" strokeWidth="50" />
      <path d={E40_DUAL} stroke="#ffe067" strokeWidth="44" />
      <path d="M295 935 340 990" stroke="#ffe067" strokeWidth="34" />
      <path d={E40} stroke="#ffe067" strokeWidth="26" />
      <path d="M285 925 315 965M325 975 655 1350M680 1375 955 1695M970 1710 1125 1890" stroke="#dfb04c" strokeWidth="9" />
      <path d="M325 975 655 1350M680 1375 955 1695M970 1710 1125 1890" stroke="#f1eadb" strokeWidth="3" />
      <path d={E95} stroke="#dfb04c" strokeWidth="26" />
      <path d={E95} stroke="#ffe067" strokeWidth="20" />
    </g>
    <defs>
      {STREETS.map((s) => (
        <path key={s.id} id={`street-${s.id}`} d={s.d} />
      ))}
    </defs>
    {STREETS.map((s) => (
      <MapText key={s.id} $tone={s.dark ? '#35332f' : '#65605a'}>
        <textPath href={`#street-${s.id}`} textLength={s.w} lengthAdjust="spacingAndGlyphs">{s.t}</textPath>
      </MapText>
    ))}
    {LABELS.map((l) => (
      <MapText key={l.t + l.x} x={l.x} y={l.y} textLength={l.w} lengthAdjust="spacingAndGlyphs" $tone={l.tone} $italic={l.italic}>
        {l.t}
      </MapText>
    ))}
    {SHIELDS.map(([x, y, w, t]) => (
      <g key={`${x}`}>
        <rect x={x} y={y} width={w} height="33" fill="#6a9e3e" />
        <ShieldText x={x + 9} y={y + 26} textLength={w - 18} lengthAdjust="spacingAndGlyphs" fontWeight={t === 'E40' ? 700 : 400}>{t}</ShieldText>
      </g>
    ))}
    {METRO_MARKS.map(([x, y]) => (
      <path key={`${x}`} transform={`translate(${x} ${y})`} d="M0 18 6 0 12 10 18 0 24 18V20H14V17L16 16 15 10 12 16 9 10 8 16 10 17V20H0Z" fill="#0a9c3a" stroke="#e9efe0" strokeWidth="3" paintOrder="stroke" />
    ))}
    {POINTS.map(([x, y, c, d]) => (
      <g key={`${x}`} transform={`translate(${x} ${y})`}>
        <circle r="19" fill="#fff" />
        <path d={d} fill={c} />
      </g>
    ))}
    <path
      d="M2105 1086C2098 1052 2039 1003 2039 957A66 66 0 0 1 2171 957C2171 1003 2112 1052 2105 1086ZM2105 921A34 34 0 1 0 2105 989 34 34 0 1 0 2105 921Z"
      fill="#bd4443"
      fillRule="evenodd"
    />
    <circle cx="2105" cy="955" r="34" fill="#e8e4dc" />
  </svg>
);

/* ---------- page ---------- */

const MENU = ['Главная', 'Врачи', 'Прайс', 'Расписание', 'Галерея', 'Форум', 'Блог', 'Контакты'];
const HEADER_STEPS = [124, 106, 106, 157, 124, 111, 92, 93];
const FOOTER_STEPS = [124, 105, 107, 160, 124, 111, 92, 93];

export default function App() {
  return (
    <>
      <GlobalStyle />
      <Page>
        <TopBar>
          <TopContacts>
            <TopContact $gap={29} href="#"><Mail w={15} />info@vitaclinica.com</TopContact>
            <TopContact $gap={0} href="#"><Phone w={15} />(044) 123 4567</TopContact>
          </TopContacts>
          <Social><SocialLinks /></Social>
        </TopBar>
        <NavBar>
          {MENU.map((m, i) => (
            <NavCell key={m} $w={HEADER_STEPS[i]}>
              <HeaderLink href="#" $active={i === 7}>{m}</HeaderLink>
            </NavCell>
          ))}
        </NavBar>
        <Main>
          <Crumbs>
            <Crumb $w={79}>Главная</Crumb>
            <Slash>/</Slash>
            <Crumb $w={70} $current>Контакты</Crumb>
          </Crumbs>
          <MapFrame><CityMap /></MapFrame>
          <Columns>
            <Info>
              <InfoHeading>Контактная информация</InfoHeading>
              <InfoLine $indent={4} $strong $h={32}>VITA клиника</InfoLine>
              <InfoLine $indent={3} $h={34}>02145, Украина, г. Киев, ул. Шевченка, 12а</InfoLine>
              <InfoLine $indent={4}>Телефон: (044) 123 4567</InfoLine>
              <InfoLine $indent={2}>E-mail: <a href="#">info@vitaclinica.com</a></InfoLine>
            </Info>
            <Form>
              <Heading>Контактная форма</Heading>
              <Fields>
                <Input placeholder="Имя:" />
                <Input placeholder="E-mail:" $raised />
                <Input placeholder="Телефон:" />
              </Fields>
              <Message placeholder="Введите сообщение.." />
              <Submit type="button">ОТПРАВИТЬ</Submit>
            </Form>
          </Columns>
        </Main>
        <Footer>
          <FooterNav>
            {MENU.map((m, i) => (
              <NavCell key={m} $w={FOOTER_STEPS[i]}>
                <NavLink href="#" $active={i === 7}>{m}</NavLink>
              </NavCell>
            ))}
            <FooterSocial><SocialLinks /></FooterSocial>
          </FooterNav>
          <FooterContacts>
            <FooterContact $w={550} $gap={13} href="#"><svg width="14" height="26" viewBox="0 0 14 26"><g transform="translate(0 6)"><Pin /></g></svg><span>02145, Украина, г. Киев, ул. Шевченка, 12а</span></FooterContact>
            <FooterContact $w={307} $gap={12} $spacing={0.13} href="#"><svg width="20" height="26" viewBox="0 0 20 26"><g transform="translate(0 9)"><Mail w={20} /></g></svg><span>info@vitaclinica.com</span></FooterContact>
            <FooterContact $w={220} $gap={14} href="#"><svg width="20" height="26" viewBox="0 0 20 26"><g transform="translate(0 6)"><Phone w={20} /></g></svg><span>(044) 123 4567</span></FooterContact>
          </FooterContacts>
        </Footer>
      </Page>
    </>
  );
}
